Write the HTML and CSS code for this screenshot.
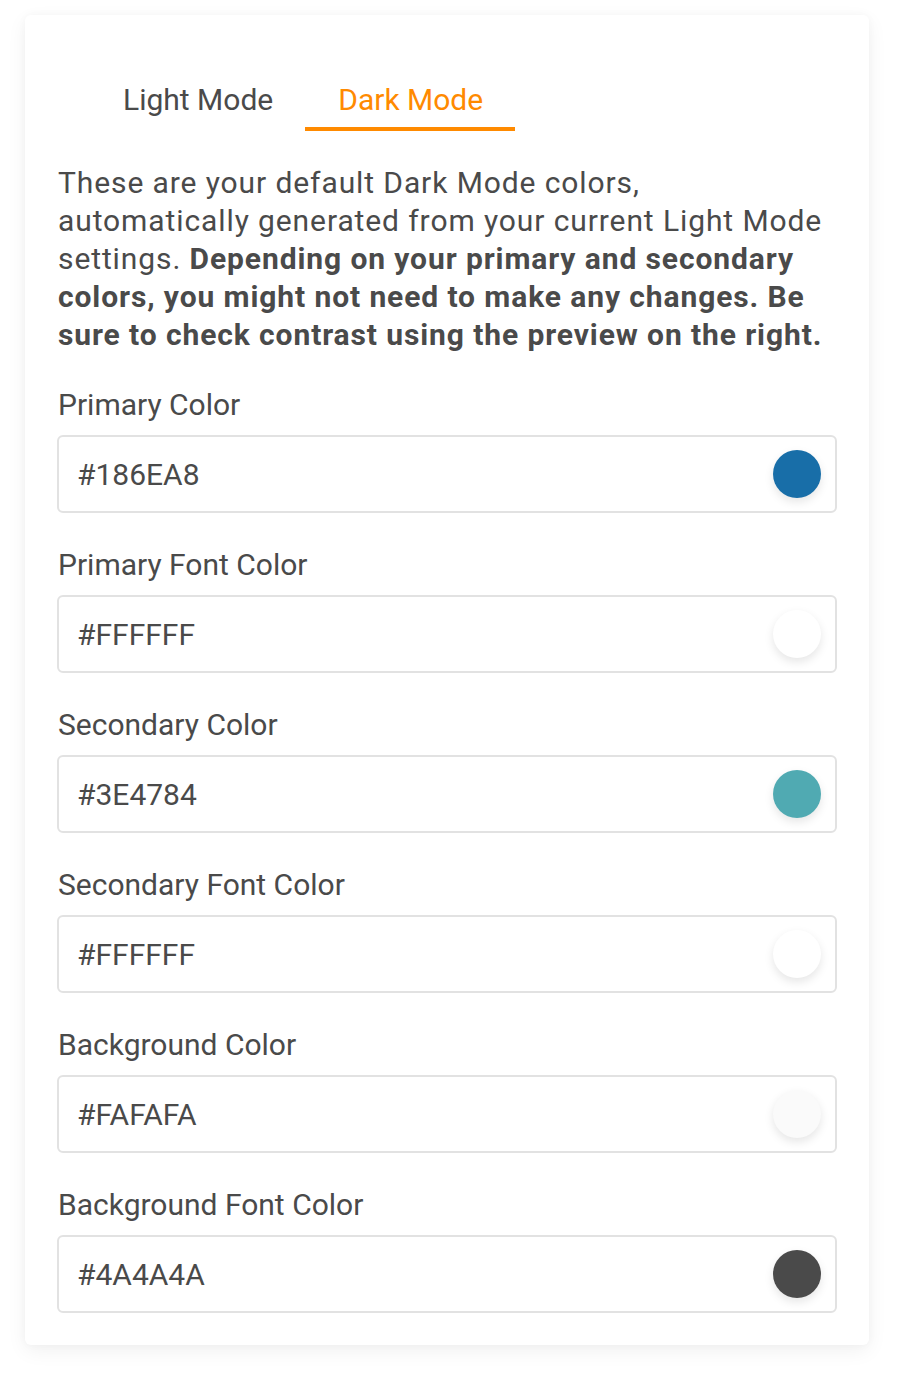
FILE: index.html
```html
<!DOCTYPE html>
<html lang="en">
<head>
<meta charset="utf-8">
<title>Dark Mode colors</title>
<link rel="stylesheet" href="styles.css">
</head>
<body>
<div class="card">
  <div class="tabs">
    <div class="tab">Light Mode</div>
    <div class="tab active">Dark Mode</div>
  </div>
  <p class="intro">These are your default Dark Mode colors, automatically generated from your current Light Mode settings. <strong>Depending on your primary and secondary colors, you might not need to make any changes. Be sure to check contrast using the preview on the right.</strong></p>

  <div class="field">
    <div class="label">Primary Color</div>
    <div class="input"><span class="value">#186EA8</span><span class="swatch sw-primary"></span></div>
  </div>
  <div class="field">
    <div class="label">Primary Font Color</div>
    <div class="input"><span class="value">#FFFFFF</span><span class="swatch sw-white"></span></div>
  </div>
  <div class="field">
    <div class="label">Secondary Color</div>
    <div class="input"><span class="value">#3E4784</span><span class="swatch sw-secondary"></span></div>
  </div>
  <div class="field">
    <div class="label">Secondary Font Color</div>
    <div class="input"><span class="value">#FFFFFF</span><span class="swatch sw-white"></span></div>
  </div>
  <div class="field">
    <div class="label">Background Color</div>
    <div class="input"><span class="value">#FAFAFA</span><span class="swatch sw-bg"></span></div>
  </div>
  <div class="field">
    <div class="label">Background Font Color</div>
    <div class="input"><span class="value">#4A4A4A</span><span class="swatch sw-dark"></span></div>
  </div>
</div>
</body>
</html>
```
FILE: styles.css
```css
html, body {
  margin: 0;
  padding: 0;
  background: #ffffff;
}
body {
  padding: 15px 36px 34px 25px;
  font-family: Roboto, "Noto Sans", sans-serif;
  color: #4a4a4a;
}
.card {
  width: 844px;
  box-sizing: border-box;
  background: #fff;
  border-radius: 6px;
  box-shadow: 0 6px 20px rgba(0, 0, 0, 0.06), 0 0 8px rgba(0, 0, 0, 0.03);
  padding: 33px 32px 32px 32px;
}
.tabs {
  display: flex;
  padding-left: 33px;
  padding-top: 33px;
}
.tab {
  font-size: 30px;
  line-height: 38px;
  padding: 0 32px 8px 33px;
  border-bottom: 4px solid transparent;
  color: #4a4a4a;
}
.tab.active {
  color: #ff8a00;
  border-bottom-color: #ff8a00;
}
.intro {
  margin: 33px 0 0 1px;
  width: 768px;
  font-size: 30px;
  line-height: 38px;
  letter-spacing: 0.9px;
}
.intro strong {
  font-weight: 700;
  letter-spacing: 0.9px;
}
.field {
  margin-top: 32px;
}
.field + .field {
  margin-top: 33px;
}
.label {
  font-size: 30px;
  line-height: 38px;
  margin-bottom: 11px;
  padding-left: 1px;
}
.input {
  height: 78px;
  box-sizing: border-box;
  border: 2px solid #e2e2e2;
  border-radius: 6px;
  display: flex;
  align-items: center;
  justify-content: space-between;
  padding: 0 14px 0 18px;
}
.value {
  font-size: 30px;
}
.swatch {
  width: 48px;
  height: 48px;
  border-radius: 50%;
  box-shadow: 0 4px 10px rgba(0, 0, 0, 0.10);
}
.sw-primary { background: #186ea8; }
.sw-white { background: #ffffff; }
.sw-secondary { background: #50aab2; }
.sw-bg { background: #fafafa; }
.sw-dark { background: #4a4a4a; }
```
